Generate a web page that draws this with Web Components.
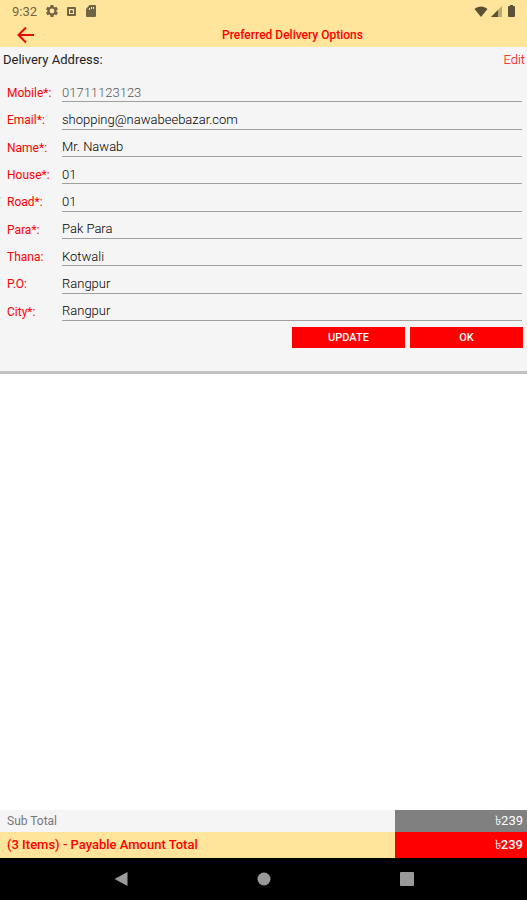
<!DOCTYPE html>
<html lang="en">
<head>
  <meta charset="UTF-8">
  <meta name="viewport" content="width=device-width, initial-scale=1.0">
  <title>Preferred Delivery Options</title>
  <style>
    body {
      margin: 0;
      font-family: Roboto, "Noto Sans", sans-serif;
      font-size: 13px;
      background: #fff;
      --accent: #ff0000;
      --cream: #ffe59c;
      --panel: #f5f5f5;
    }
  </style>
</head>
<body>
  <delivery-screen>
    <status-bar slot="top" time="9:32"></status-bar>
    <app-header slot="top">Preferred Delivery Options</app-header>
    <address-card heading="Delivery Address:">
      <address-field label="Mobile*:" value="01711123123" locked></address-field>
      <address-field label="Email*:" value="shopping@nawabeebazar.com"></address-field>
      <address-field label="Name*:" value="Mr. Nawab"></address-field>
      <address-field label="House*:" value="01"></address-field>
      <address-field label="Road*:" value="01"></address-field>
      <address-field label="Para*:" value="Pak Para"></address-field>
      <address-field label="Thana:" value="Kotwali"></address-field>
      <address-field label="P.O:" value="Rangpur"></address-field>
      <address-field label="City*:" value="Rangpur"></address-field>
      <action-button slot="actions">UPDATE</action-button>
      <action-button slot="actions">OK</action-button>
    </address-card>
    <total-row slot="bottom" amount="৳239">Sub Total</total-row>
    <total-row slot="bottom" amount="৳239" payable>(3 Items) - Payable Amount Total</total-row>
    <nav-bar slot="bottom"></nav-bar>
  </delivery-screen>

  <script>
    // Base class: every component renders its own template
    class BaseElement extends HTMLElement {
      constructor() {
        super();
        this.attachShadow({ mode: 'open' });
      }

      connectedCallback() {
        this.shadowRoot.innerHTML = this.render();
      }
    }

    // Full height column: top bars, content, totals and navigation
    class DeliveryScreen extends BaseElement {
      render() {
        return `
          <style>
            :host { display: flex; flex-direction: column; min-height: 100vh; }
            main { flex: 1; }
          </style>
          <header><slot name="top"></slot></header>
          <main><slot></slot></main>
          <footer><slot name="bottom"></slot></footer>
        `;
      }
    }

    class StatusBar extends BaseElement {
      render() {
        return `
          <style>
            :host {
              display: flex;
              align-items: center;
              justify-content: space-between;
              height: 22px;
              padding: 0 12px;
              background: var(--cream);
              color: #6f6443;
              font-size: 13px;
            }
            div { display: flex; align-items: center; }
            .left { gap: 9px; }
            .right { gap: 3px; }
            svg { display: block; fill: currentColor; }
            .right svg { color: #5b5136; }
            .battery { margin-left: 3px; }
          </style>
          <div class="left">
            <span>${this.getAttribute('time')}</span>
            <svg width="12" height="12" viewBox="2 2 20 20"><path fill-rule="evenodd" d="M19.4 13a7.500 7.500 0 0 0 0-2l2.100-1.600c.2-.2.2-.5.1-.7l-2-3.400c-.1-.2-.4-.3-.6-.2l-2.500 1a7.300 7.300 0 0 0-1.700-1l-.4-2.700a.5.5 0 0 0-.5-.4h-4a.5.5 0 0 0-.5.4L9 5.100c-.6.200-1.200.6-1.700 1l-2.500-1c-.2-.1-.5 0-.6.2l-2 3.400c-.1.2-.1.5.1.7L4.400 11a7.500 7.500 0 0 0 0 2l-2.100 1.600c-.2.2-.2.5-.1.7l2 3.400c.1.2.4.3.6.2l2.500-1c.5.4 1.100.8 1.700 1l.4 2.700c0 .2.2.4.5.4h4c.3 0 .5-.2.5-.4l.4-2.700c.6-.2 1.200-.6 1.700-1l2.500 1c.2.1.5 0 .6-.2l2-3.400c.1-.2.1-.5-.1-.7zM12 16a4 4 0 1 1 0-8 4 4 0 0 1 0 8z"/></svg>
            <svg width="9" height="9" viewBox="0 0 9 9"><path fill-rule="evenodd" d="M1 0h7a1 1 0 0 1 1 1v7a1 1 0 0 1-1 1H1a1 1 0 0 1-1-1V1a1 1 0 0 1 1-1zM2 2v5h5V2z"/><path d="M3.500 3h2v1H6v2H3V4h.5z"/></svg>
            <svg width="11" height="12" viewBox="0 0 11 12"><path fill-rule="evenodd" d="M4.500 0H10a1 1 0 0 1 1 1v10a1 1 0 0 1-1 1H2a1 1 0 0 1-1-1V4zM4 3v2h1V3zM6 2v2h1V2zM8 2v2h1V2z"/></svg>
          </div>
          <div class="right">
            <svg width="14" height="11" viewBox="0 0 14 11"><path d="M7 11 0.500 3C2.200 1.400 4.500.5 7 .5s4.800.9 6.500 2.500z"/></svg>
            <svg width="11" height="11" viewBox="0 0 11 11"><path opacity=".4" d="M0 11 11 0v11z"/><path d="M0 11l7-7v7z"/></svg>
            <svg class="battery" width="7" height="12" viewBox="0 0 7 12"><path d="M2 0h3v1h1a1 1 0 0 1 1 1v9a1 1 0 0 1-1 1H1a1 1 0 0 1-1-1V2a1 1 0 0 1 1-1h1z"/></svg>
          </div>
        `;
      }
    }

    class AppHeader extends BaseElement {
      render() {
        return `
          <style>
            :host {
              display: flex;
              align-items: center;
              height: 25px;
              background: var(--cream);
              color: var(--accent);
            }
            button {
              display: flex;
              width: 58px;
              padding: 0 0 0 17px;
              border: 0;
              background: none;
              color: #e60c00;
            }
            h1 {
              flex: 1;
              margin: 0;
              text-align: center;
              font-size: 12px;
              font-weight: 500;
            }
          </style>
          <button aria-label="Back">
            <svg width="18" height="18" viewBox="0 0 18 18" fill="none" stroke="currentColor" stroke-width="2"><path d="M17 9H2M9 1.500 1.500 9 9 16.500"/></svg>
          </button>
          <h1><slot></slot></h1>
        `;
      }
    }

    class AddressCard extends BaseElement {
      render() {
        return `
          <style>
            :host {
              display: block;
              background: var(--panel);
              border-bottom: 3px solid #c0c0c0;
            }
            .heading {
              display: flex;
              justify-content: space-between;
              align-items: center;
              height: 28px;
              padding: 0 2px 4px 3px;
              box-sizing: border-box;
            }
            h2 { margin: 0; font-size: 13px; font-weight: 400; color: #222; }
            a { color: var(--accent); text-decoration: none; font-weight: 300; }
            /* nine equal rows */
            form {
              display: grid;
              grid-auto-rows: 1fr;
              min-height: 246px;
              padding: 0 5px 0 7px;
            }
            .actions {
              display: flex;
              justify-content: flex-end;
              gap: 5px;
              padding: 6px 4px 23px;
            }
          </style>
          <div class="heading">
            <h2>${this.getAttribute('heading')}</h2>
            <a href="#">Edit</a>
          </div>
          <form><slot></slot></form>
          <div class="actions"><slot name="actions"></slot></div>
        `;
      }
    }

    class AddressField extends BaseElement {
      render() {
        const disabled = this.hasAttribute('locked') ? 'disabled' : '';
        return `
          <style>
            :host { display: flex; align-items: stretch; }
            label {
              width: 55px;
              padding-top: 10px;
              line-height: 16px;
              color: var(--accent);
              font-size: 12px;
            }
            input {
              flex: 1;
              min-width: 0;
              padding: 8px 0 0;
              border: 0;
              border-bottom: 1px solid #a0a0a0;
              border-radius: 0;
              background: none;
              color: #000;
              font: inherit;
              font-weight: 300;
              outline: none;
            }
            input:disabled { color: #555; }
          </style>
          <label for="field">${this.getAttribute('label')}</label>
          <input id="field" type="text" value="${this.getAttribute('value')}" ${disabled}>
        `;
      }
    }

    class ActionButton extends BaseElement {
      render() {
        return `
          <style>
            :host { display: block; width: 113px; }
            button {
              display: block;
              width: 100%;
              height: 21px;
              padding: 0;
              border: 0;
              background: var(--accent);
              color: #fff;
              font: 500 11px Roboto, sans-serif;
            }
          </style>
          <button type="button"><slot></slot></button>
        `;
      }
    }

    class TotalRow extends BaseElement {
      render() {
        return `
          <style>
            :host {
              display: grid;
              grid-template-columns: 3fr 1fr;
              height: 22px;
              line-height: 22px;
              background: var(--panel);
              color: #777;
            }
            :host([payable]) {
              height: 26px;
              line-height: 26px;
              background: var(--cream);
              color: var(--accent);
              font-weight: 500;
            }
            .name { padding-left: 7px; }
            :host(:not([payable])) .name { font-size: 12px; }
            .amount {
              padding-right: 4px;
              background: #808080;
              color: #fff;
              text-align: right;
            }
            :host([payable]) .amount { background: var(--accent); }
          </style>
          <span class="name"><slot></slot></span>
          <span class="amount">${this.getAttribute('amount')}</span>
        `;
      }
    }

    // Android navigation buttons
    class NavBar extends BaseElement {
      render() {
        return `
          <style>
            :host {
              display: flex;
              justify-content: center;
              align-items: center;
              gap: 129px;
              height: 42px;
              background: #000;
            }
            button {
              padding: 0;
              border: 0;
              background: none;
              color: #999;
            }
            svg { display: block; fill: currentColor; }
          </style>
          <button aria-label="Back"><svg width="14" height="14" viewBox="0 0 14 14"><path d="M13.500 0v14L.5 7z"/></svg></button>
          <button aria-label="Home"><svg width="14" height="14" viewBox="0 0 14 14"><circle cx="7" cy="7" r="6.500"/></svg></button>
          <button aria-label="Recents"><svg width="14" height="14" viewBox="0 0 14 14"><rect width="14" height="14" rx="1"/></svg></button>
        `;
      }
    }

    customElements.define('delivery-screen', DeliveryScreen);
    customElements.define('status-bar', StatusBar);
    customElements.define('app-header', AppHeader);
    customElements.define('address-card', AddressCard);
    customElements.define('address-field', AddressField);
    customElements.define('action-button', ActionButton);
    customElements.define('total-row', TotalRow);
    customElements.define('nav-bar', NavBar);
  </script>
</body>
</html>
